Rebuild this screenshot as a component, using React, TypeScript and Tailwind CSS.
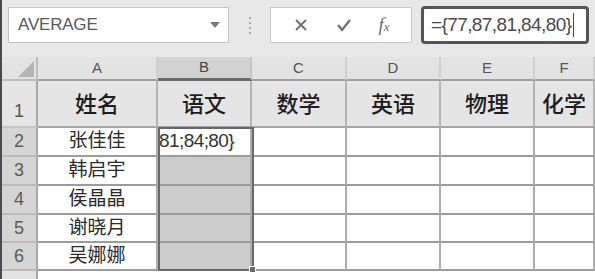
import React from 'react';

const cols = [
  { key: 'A', w: 'w-[120px]' },
  { key: 'B', w: 'w-[94px]' },
  { key: 'C', w: 'w-[95px]' },
  { key: 'D', w: 'w-[94px]' },
  { key: 'E', w: 'w-[94px]' },
  { key: 'F', w: 'flex-1' },
];

const headers = ['姓名', '语文', '数学', '英语', '物理', '化学'];
const names = ['张佳佳', '韩启宇', '侯晶晶', '谢晓月', '吴娜娜'];
const rowHeights = ['h-[29px]', 'h-[29px]', 'h-[29px]', 'h-[28px]', 'h-[28px]'];

const font = { fontFamily: '"Liberation Sans", "Noto Sans CJK SC", sans-serif' };

function Toolbar() {
  return (
    <div className="flex h-[57px] items-start bg-[#e8e8e8] pl-[6px] pt-[7px]">
      <div className="flex h-[36px] w-[221px] items-center justify-between border border-[#c4c4c4] bg-white pl-[9px] pr-[8px]">
        <span className="text-[17px] tracking-[-0.2px] text-[#5a5a5a]">AVERAGE</span>
        <svg width="10" height="6" viewBox="0 0 10 6">
          <path d="M0 0h10L5 6z" fill="#7a7a7a" />
        </svg>
      </div>
      <div className="flex h-[36px] w-[41px] flex-col items-center justify-center gap-[3px]">
        {[0, 1, 2, 3].map((i) => (
          <div key={i} className="h-[2px] w-[2px] bg-[#a8a8a8]" />
        ))}
      </div>
      <div className="flex h-[36px] w-[142px] items-center border border-[#c8c8c8] bg-white">
        <div className="flex w-[54px] justify-center pl-[6px]">
          <svg width="14" height="14" viewBox="0 0 14 14">
            <path d="M2 2l10 10M12 2L2 12" stroke="#6e6e6e" strokeWidth="1.8" />
          </svg>
        </div>
        <div className="flex w-[38px] justify-center">
          <svg width="16" height="14" viewBox="0 0 16 14">
            <path d="M2 7l4 5 8-10" stroke="#6e6e6e" strokeWidth="2.2" fill="none" />
          </svg>
        </div>
        <div className="flex flex-1 justify-center pr-[6px]">
          <span className="text-[19px] italic text-[#6e6e6e]" style={{ fontFamily: '"Liberation Serif", serif' }}>
            f<span className="text-[13px]">x</span>
          </span>
        </div>
      </div>
      <div className="ml-[9px] -mt-[1px] flex h-[38px] w-[168px] items-center rounded-[4px] border-[3px] border-[#555555] bg-white pl-[7px]">
        <span className="text-[19px] tracking-[-0.6px] text-[#4a4a4a]">={'{'}77,87,81,84,80{'}'}</span>
        <div className="ml-[2px] h-[24px] w-[1px] bg-[#444]" />
      </div>
    </div>
  );
}

function ColumnHeader() {
  return (
    <div className="flex h-[24px] bg-[#e3e3e3]">
      <div className="flex w-[36px] items-end justify-end border-r-2 border-b-2 border-[#bdbdbd] pb-[2px] pr-[2px]">
        <svg width="16" height="16" viewBox="0 0 16 16">
          <path d="M16 0V16H0z" fill="#b4b4b4" />
        </svg>
      </div>
      {cols.map((c) => (
        <div
          key={c.key}
          className={`${c.w} flex items-center justify-center border-r-2 text-[15px] ${
            c.key === 'B'
              ? 'border-b-[3px] border-r-[#c4c4c4] border-b-[#6a6a6a] bg-[#d2d2d2] text-[#444]'
              : 'border-b-2 border-r-[#cfcfcf] border-b-[#a0a0a0] text-[#555]'
          }`}
        >
          {c.key}
        </div>
      ))}
    </div>
  );
}

export default function App() {
  return (
    <div className="h-[279px] w-[595px] overflow-hidden border-l-2 border-[#4a4a4a] bg-[#e8e8e8]" style={font}>
      <Toolbar />
      <div className="relative">
        <ColumnHeader />
        {/* row 1 */}
        <div className="flex h-[47px] bg-[#e5e5e5]">
          <div className="flex w-[36px] items-end justify-center border-r-2 border-b-2 border-r-[#a8a8a8] border-b-[#c4c4c4] pb-[1px] text-[18px] text-[#555]">
            1
          </div>
          {cols.map((c, i) => (
            <div
              key={c.key}
              className={`${c.w} flex items-center justify-center overflow-hidden whitespace-nowrap border-r-2 border-b-2 border-r-[#b4b4b4] border-b-[#a4a4a4] pt-[2px] text-[22px] font-medium text-[#1e1e1e]`}
            >
              {headers[i]}
            </div>
          ))}
        </div>
        {/* rows 2-6 */}
        {names.map((n, r) => (
          <div key={n} className={`flex ${rowHeights[r]}`}>
            <div className="flex w-[36px] items-center justify-center border-r-2 border-b-2 border-r-[#a8a8a8] border-b-[#bcbcbc] bg-[#d5d5d5] text-[18px] text-[#5a5a5a]">
              {r + 2}
            </div>
            {cols.map((c) => (
              <div
                key={c.key}
                className={`${c.w} flex items-center whitespace-nowrap border-r-2 border-b-2 border-r-[#adadad] border-b-[#9c9c9c] ${
                  c.key === 'B' && r > 0 ? 'bg-[#cdcdcd]' : 'bg-white'
                } ${c.key === 'A' ? 'justify-center text-[19px] text-[#2a2a2a]' : 'justify-end overflow-hidden'}`}
              >
                {c.key === 'A' && n}
                {c.key === 'B' && r === 0 && (
                  <span className="pr-[16px] text-[19px] tracking-[-0.6px] text-[#333]">={'{'}77;87;81;84;80{'}'}</span>
                )}
              </div>
            ))}
          </div>
        ))}
        {/* row 7 */}
        <div className="flex h-[10px]">
          <div className="w-[36px] border-r-2 border-[#a8a8a8] bg-[#e3e3e3]" />
          <div className="flex-1 bg-white" />
        </div>
        {/* selection B2:B6 */}
        <div className="pointer-events-none absolute left-[156px] top-[70px] h-[144px] w-[96px] border-[2px] border-[#686868]" />
        <div className="absolute left-[247px] top-[209px] h-[7px] w-[7px] border border-white bg-[#6a6a6a]" />
      </div>
    </div>
  );
}
